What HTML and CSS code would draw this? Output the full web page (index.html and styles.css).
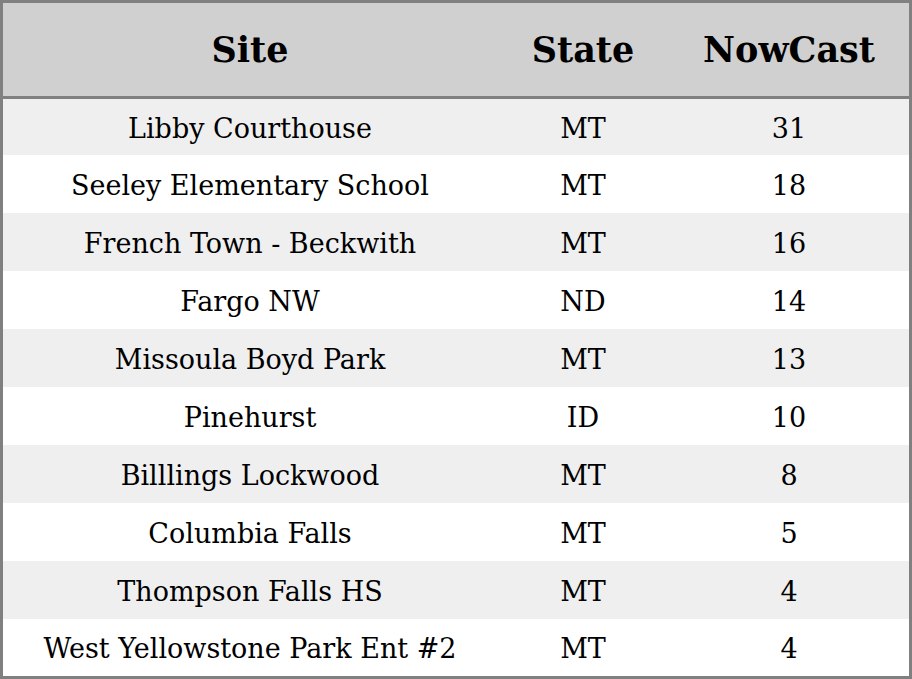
FILE: index.html
```html
<!DOCTYPE html>
<html>
<head>
<meta charset="utf-8">
<link rel="stylesheet" href="styles.css">
</head>
<body>
<div class="table">
  <div class="row head"><div class="cell">Site</div><div class="cell">State</div><div class="cell">NowCast</div></div>
  <div class="row odd"><div class="cell">Libby Courthouse</div><div class="cell">MT</div><div class="cell">31</div></div>
  <div class="row"><div class="cell">Seeley Elementary School</div><div class="cell">MT</div><div class="cell">18</div></div>
  <div class="row odd"><div class="cell">French Town - Beckwith</div><div class="cell">MT</div><div class="cell">16</div></div>
  <div class="row"><div class="cell">Fargo NW</div><div class="cell">ND</div><div class="cell">14</div></div>
  <div class="row odd"><div class="cell">Missoula Boyd Park</div><div class="cell">MT</div><div class="cell">13</div></div>
  <div class="row"><div class="cell">Pinehurst</div><div class="cell">ID</div><div class="cell">10</div></div>
  <div class="row odd"><div class="cell">Billlings Lockwood</div><div class="cell">MT</div><div class="cell">8</div></div>
  <div class="row"><div class="cell">Columbia Falls</div><div class="cell">MT</div><div class="cell">5</div></div>
  <div class="row odd"><div class="cell">Thompson Falls HS</div><div class="cell">MT</div><div class="cell">4</div></div>
  <div class="row"><div class="cell">West Yellowstone Park Ent #2</div><div class="cell">MT</div><div class="cell">4</div></div>
</div>
</body>
</html>
```
FILE: styles.css
```css
html, body {
  margin: 0;
  padding: 0;
  background: #ffffff;
}
.table {
  box-sizing: border-box;
  width: 912px;
  height: 679px;
  border: 3px solid #808080;
  display: grid;
  grid-template-columns: 494px 172px 240px;
  grid-template-rows: 96px 56px repeat(8, 58px) 57px;
  font-family: "DejaVu Serif", serif;
  color: #000;
}
.row {
  display: contents;
}
.cell {
  display: flex;
  align-items: center;
  justify-content: center;
  padding-top: 2px;
  font-size: 27px;
  white-space: nowrap;
  background: #ffffff;
}
.odd .cell {
  background: #efefef;
}
.head .cell {
  padding-top: 0;
  background: #d0d0d0;
  font-weight: bold;
  font-size: 35px;
  border-bottom: 3px solid #808080;
}
```
